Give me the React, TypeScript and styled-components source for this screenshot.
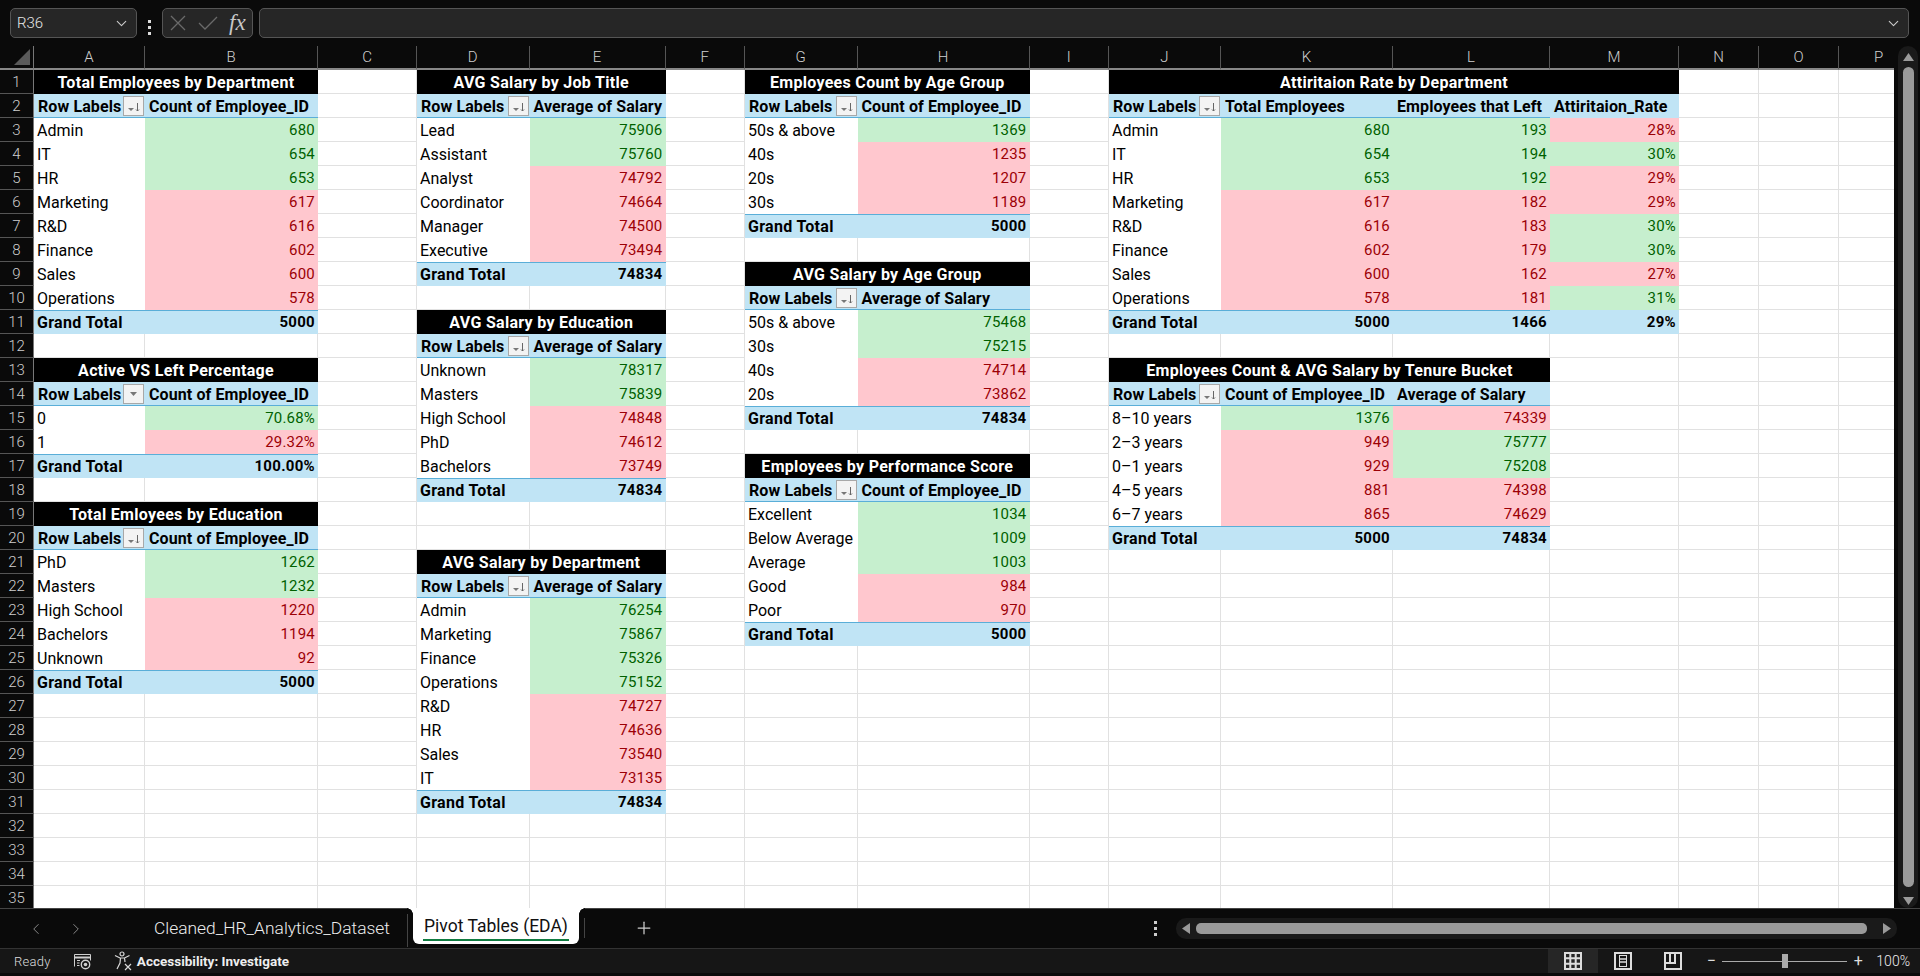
import React from "react";
import styled, { createGlobalStyle } from "styled-components";
import { ChevronDown, ChevronLeft, ChevronRight, Plus } from "lucide-react";

type Tone = "g" | "r";
type Entry = { label: string; values: [string, Tone][] };
type Pivot = {
  col: number;
  row: number;
  title: string;
  heads: string[];
  rows: Entry[];
  total: string[];
  plainFilter?: boolean;
  ruleCols?: number;
};

const G = (v: string | number): [string, Tone] => [String(v), "g"];
const R = (v: string | number): [string, Tone] => [String(v), "r"];
const e = (label: string, ...values: [string, Tone][]): Entry => ({ label, values });

const COUNT = "Count of Employee_ID";
const AVG = "Average of Salary";

const pivots: Pivot[] = [
  {
    col: 0, row: 1, title: "Total Employees by Department", heads: [COUNT],
    rows: [e("Admin", G(680)), e("IT", G(654)), e("HR", G(653)), e("Marketing", R(617)), e("R&D", R(616)), e("Finance", R(602)), e("Sales", R(600)), e("Operations", R(578))],
    total: ["5000"],
  },
  {
    col: 0, row: 13, title: "Active VS Left Percentage", heads: [COUNT], plainFilter: true,
    rows: [e("0", G("70.68%")), e("1", R("29.32%"))],
    total: ["100.00%"],
  },
  {
    col: 0, row: 19, title: "Total Emloyees by Education", heads: [COUNT],
    rows: [e("PhD", G(1262)), e("Masters", G(1232)), e("High School", R(1220)), e("Bachelors", R(1194)), e("Unknown", R(92))],
    total: ["5000"],
  },
  {
    col: 3, row: 1, title: "AVG Salary by Job Title", heads: [AVG],
    rows: [e("Lead", G(75906)), e("Assistant", G(75760)), e("Analyst", R(74792)), e("Coordinator", R(74664)), e("Manager", R(74500)), e("Executive", R(73494))],
    total: ["74834"],
  },
  {
    col: 3, row: 11, title: "AVG Salary by Education", heads: [AVG],
    rows: [e("Unknown", G(78317)), e("Masters", G(75839)), e("High School", R(74848)), e("PhD", R(74612)), e("Bachelors", R(73749))],
    total: ["74834"],
  },
  {
    col: 3, row: 21, title: "AVG Salary by Department", heads: [AVG],
    rows: [e("Admin", G(76254)), e("Marketing", G(75867)), e("Finance", G(75326)), e("Operations", G(75152)), e("R&D", R(74727)), e("HR", R(74636)), e("Sales", R(73540)), e("IT", R(73135))],
    total: ["74834"],
  },
  {
    col: 6, row: 1, title: "Employees Count by Age Group", heads: [COUNT],
    rows: [e("50s & above", G(1369)), e("40s", R(1235)), e("20s", R(1207)), e("30s", R(1189))],
    total: ["5000"],
  },
  {
    col: 6, row: 9, title: "AVG Salary by Age Group", heads: [AVG],
    rows: [e("50s & above", G(75468)), e("30s", G(75215)), e("40s", R(74714)), e("20s", R(73862))],
    total: ["74834"],
  },
  {
    col: 6, row: 17, title: "Employees by Performance Score", heads: [COUNT],
    rows: [e("Excellent", G(1034)), e("Below Average", G(1009)), e("Average", G(1003)), e("Good", R(984)), e("Poor", R(970))],
    total: ["5000"],
  },
  {
    col: 9, row: 1, title: "Attiritaion Rate by Department", heads: ["Total Employees", "Employees that Left", "Attiritaion_Rate"], ruleCols: 3,
    rows: [
      e("Admin", G(680), G(193), R("28%")),
      e("IT", G(654), G(194), G("30%")),
      e("HR", G(653), G(192), R("29%")),
      e("Marketing", R(617), R(182), R("29%")),
      e("R&D", R(616), R(183), G("30%")),
      e("Finance", R(602), R(179), G("30%")),
      e("Sales", R(600), R(162), R("27%")),
      e("Operations", R(578), R(181), G("31%")),
    ],
    total: ["5000", "1466", "29%"],
  },
  {
    col: 9, row: 13, title: "Employees Count & AVG Salary by Tenure Bucket", heads: [COUNT, AVG],
    rows: [
      e("8–10 years", G(1376), R(74339)),
      e("2–3 years", R(949), G(75777)),
      e("0–1 years", R(929), G(75208)),
      e("4–5 years", R(881), R(74398)),
      e("6–7 years", R(865), R(74629)),
    ],
    total: ["5000", "74834"],
  },
];

const COLS = "ABCDEFGHIJKLMNOP".split("");
const COL_WIDTHS = [111, 173, 99, 112.5, 136, 79.5, 112.5, 172, 79.5, 112, 172, 157, 129, 80, 80, 80];
const ROW_COUNT = 35;

type Kind = "title" | "head" | "label" | "g" | "r" | "total" | "totalNum";
type SheetCell = { kind: Kind; text: string; span?: number; rule?: boolean; filter?: "sort" | "plain"; covered?: boolean };

const cellMap = new Map<string, SheetCell>();
const put = (c: number, r: number, cell: SheetCell) => cellMap.set(`${c},${r}`, cell);

pivots.forEach((p) => {
  const width = p.heads.length + 1;
  const ruled = (i: number) => i < (p.ruleCols ?? width);
  put(p.col, p.row, { kind: "title", text: p.title, span: width });
  for (let i = 1; i < width; i++) put(p.col + i, p.row, { kind: "title", text: "", covered: true });

  put(p.col, p.row + 1, { kind: "head", text: "Row Labels", rule: true, filter: p.plainFilter ? "plain" : "sort" });
  p.heads.forEach((h, i) => put(p.col + i + 1, p.row + 1, { kind: "head", text: h, rule: ruled(i + 1) }));

  p.rows.forEach((entry, ri) => {
    const r = p.row + 2 + ri;
    put(p.col, r, { kind: "label", text: entry.label });
    entry.values.forEach(([v, tone], i) => put(p.col + i + 1, r, { kind: tone, text: v }));
  });

  const tr = p.row + 2 + p.rows.length;
  put(p.col, tr, { kind: "total", text: "Grand Total", rule: true });
  p.total.forEach((v, i) => put(p.col + i + 1, tr, { kind: "totalNum", text: v, rule: ruled(i + 1) }));
});

const GlobalStyle = createGlobalStyle`
  html, body {
    margin: 0;
    padding: 0;
    height: 100%;
    background: #0a0a0a;
    overflow: hidden;
  }
  * { box-sizing: border-box; }
`;

const Page = styled.div`
  width: 1920px;
  height: 976px;
  display: flex;
  flex-direction: column;
  background: #0a0a0a;
  font-family: Roboto, "Liberation Sans", sans-serif;
  overflow: hidden;
`;

const FormulaBar = styled.div`
  height: 46px;
  flex: none;
  display: flex;
  align-items: flex-start;
  padding: 8px 11px 0 10px;
`;

const Box = styled.div`
  height: 30px;
  border: 1px solid #555;
  border-radius: 5px;
  background: #262626;
  display: flex;
  align-items: center;
  color: #e8e8e8;
`;

const NameBox = styled(Box)`
  width: 127px;
  padding: 0 6px 0 6px;
  justify-content: space-between;
  font-size: 15px;
  font-weight: 300;
`;

const Dots = styled.div`
  width: 25px;
  align-self: stretch;
  display: flex;
  flex-direction: column;
  align-items: center;
  justify-content: center;
  gap: 3px;
  i {
    width: 3px;
    height: 3px;
    background: #ddd;
  }
`;

const FxBox = styled(Box)`
  width: 91px;
  padding: 0 0 0 7px;
  gap: 12px;
`;

const FxText = styled.span`
  font-family: "Liberation Serif", serif;
  font-style: italic;
  font-size: 23px;
  line-height: 24px;
  color: #c8c8c8;
  margin-left: -1px;
`;

const FormulaInput = styled(Box)`
  flex: 1;
  margin-left: 6px;
  justify-content: flex-end;
  padding-right: 6px;
`;

const Main = styled.div`
  height: 862px;
  flex: none;
  display: flex;
`;

const SheetFrame = styled.div`
  width: 1894px;
  height: 862px;
  overflow: hidden;
  flex: none;
`;

const Sheet = styled.div`
  display: grid;
  grid-template-columns: 34px ${COL_WIDTHS.map((w) => `${w}px`).join(" ")};
  grid-template-rows: repeat(${ROW_COUNT + 1}, 24px);
  width: 1919px;
  font-size: 15px;
`;

const Corner = styled.div`
  background: #0a0a0a;
  border-right: 1px solid #777;
  border-bottom: 2px solid #888;
  position: relative;
  &::after {
    content: "";
    position: absolute;
    right: 3px;
    bottom: 3px;
    border-style: solid;
    border-width: 0 0 16px 16px;
    border-color: transparent transparent #5a5a5a transparent;
  }
`;

const ColHead = styled.div`
  background: #0a0a0a;
  color: #cfcfcf;
  border-right: 1px solid #555;
  border-bottom: 2px solid #888;
  font-weight: 300;
  font-size: 15px;
  display: flex;
  align-items: center;
  justify-content: center;
`;

const RowHead = styled.div`
  background: #0a0a0a;
  color: #cfcfcf;
  border-right: 1px solid #777;
  border-bottom: 1px solid #555;
  font-weight: 300;
  font-size: 15px;
  display: flex;
  align-items: center;
  justify-content: center;
`;

const Blank = styled.div`
  background: #fff;
  border-right: 1px solid #e1e1e1;
  border-bottom: 1px solid #e1e1e1;
`;

const palette: Record<Kind, { bg: string; fg: string; weight: number; align: string; size: number; spacing: number }> = {
  title: { bg: "#000", fg: "#fff", weight: 700, align: "center", size: 16, spacing: 0.3 },
  head: { bg: "#c0e4f5", fg: "#000", weight: 700, align: "flex-start", size: 16, spacing: 0.1 },
  label: { bg: "#fff", fg: "#000", weight: 400, align: "flex-start", size: 16, spacing: 0 },
  g: { bg: "#c6efce", fg: "#006100", weight: 400, align: "flex-end", size: 15, spacing: 0.2 },
  r: { bg: "#ffc7ce", fg: "#9c0006", weight: 400, align: "flex-end", size: 15, spacing: 0.2 },
  total: { bg: "#c0e4f5", fg: "#000", weight: 700, align: "flex-start", size: 16, spacing: 0.3 },
  totalNum: { bg: "#c0e4f5", fg: "#000", weight: 700, align: "flex-end", size: 15, spacing: 0.3 },
};

const Cell = styled.div<{ $kind: Kind; $span?: number; $rule?: boolean }>`
  position: relative;
  min-width: 0;
  display: flex;
  align-items: center;
  white-space: nowrap;
  padding: 0 3px 0 ${(p) => (p.$kind === "head" ? 4 : 3)}px;
  grid-column: span ${(p) => p.$span ?? 1};
  background: ${(p) => palette[p.$kind].bg};
  color: ${(p) => palette[p.$kind].fg};
  font-weight: ${(p) => palette[p.$kind].weight};
  font-size: ${(p) => palette[p.$kind].size}px;
  letter-spacing: ${(p) => palette[p.$kind].spacing}px;
  justify-content: ${(p) => palette[p.$kind].align};
  box-shadow: ${(p) =>
    !p.$rule ? "none" : p.$kind === "head" ? "inset 0 -1px 0 #5aaed8" : "inset 0 1px 0 #5aaed8"};
`;

const FilterButton = styled.div`
  position: absolute;
  right: 1px;
  top: 2px;
  width: 21px;
  height: 20px;
  background: #f3f3f3;
  border: 1px solid #a8a8a8;
`;

const VScroll = styled.div`
  width: 26px;
  display: flex;
`;

const VTrack = styled.div`
  width: 20px;
  margin-left: 4px;
  background: #1a1a1a;
  border-radius: 10px;
  display: flex;
  flex-direction: column;
  align-items: center;
  padding: 7px 0 3px;
  gap: 6px;
`;

const VThumb = styled.div`
  width: 11px;
  flex: 1;
  margin-bottom: 4px;
  background: #9a9a9a;
  border-radius: 6px;
`;

const TabBar = styled.div`
  height: 40px;
  flex: none;
  display: flex;
  align-items: flex-start;
  color: #eee;
  border-top: 1px solid #444;
`;

const TabNav = styled.div`
  width: 108px;
  height: 39px;
  padding-left: 27px;
  display: flex;
  align-items: center;
  gap: 22px;
  color: #8a8a8a;
  flex: none;
`;

const IdleTab = styled.div`
  margin-left: 46px;
  height: 38px;
  width: 254px;
  display: flex;
  align-items: center;
  font-size: 17.4px;
  font-weight: 300;
  color: #eee;
  white-space: nowrap;
  border-right: 1px solid #444;
`;

const ActiveTab = styled.div`
  position: relative;
  margin-left: 5px;
  margin-top: -1px;
  width: 166px;
  height: 36px;
  flex: none;
  background: #fff;
  color: #111;
  border-radius: 0 0 6px 6px;
  font-size: 17.5px;
  display: flex;
  flex-direction: column;
  align-items: center;
  justify-content: flex-end;
  padding-bottom: 3px;
  white-space: nowrap;
  &::before,
  &::after {
    content: "";
    position: absolute;
    top: 0;
    width: 6px;
    height: 6px;
  }
  &::before {
    left: -6px;
    background: radial-gradient(circle at 0 100%, #0a0a0a 5.5px, #fff 6px);
  }
  &::after {
    right: -6px;
    background: radial-gradient(circle at 100% 100%, #0a0a0a 5.5px, #fff 6px);
  }
`;

const TabLine = styled.div`
  width: 146px;
  height: 2px;
  margin-top: 3px;
  background: #107c41;
`;

const TabDivider = styled.div`
  width: 1px;
  height: 20px;
  margin: 9px 0 0 5px;
  background: #444;
`;

const AddTab = styled.div`
  width: 118px;
  height: 38px;
  display: flex;
  align-items: center;
  justify-content: center;
  color: #ccc;
`;

const TabSpacer = styled.div`
  flex: 1;
  height: 38px;
  display: flex;
  align-items: center;
  justify-content: flex-end;
  gap: 19px;
  padding-right: 23px;
`;

const VDots = styled(Dots)`
  flex: none;
  width: 3px;
  i {
    background: #ccc;
  }
`;

const HTrack = styled.div`
  width: 721px;
  height: 21px;
  flex: none;
  background: #1a1a1a;
  border-radius: 10px;
  display: flex;
  align-items: center;
  gap: 6px;
  padding: 0 6px;
`;

const HThumb = styled.div`
  flex: 1;
  height: 11px;
  margin-right: 10px;
  background: #9a9a9a;
  border-radius: 5px;
`;

const StatusBar = styled.div`
  height: 25px;
  flex: none;
  background: #161616;
  border-top: 1px solid #333;
  display: flex;
  align-items: center;
  padding: 0 10px 0 14px;
  color: #ddd;
  font-size: 13px;
`;

const StatusText = styled.span`
  font-weight: 300;
  letter-spacing: 0.3px;
`;

const StatusBold = styled.span`
  font-weight: 700;
  font-size: 13.5px;
  color: #eee;
  margin-left: 4px;
  white-space: nowrap;
`;

const StatusGroup = styled.div`
  display: flex;
  align-items: center;
  margin-left: 22px;
`;

const StatusRight = styled.div`
  margin-left: auto;
  height: 100%;
  display: flex;
  align-items: center;
`;

const ViewButton = styled.div<{ $on?: boolean }>`
  width: 50px;
  height: 100%;
  display: flex;
  align-items: center;
  justify-content: center;
  background: ${(p) => (p.$on ? "#262626" : "transparent")};
`;

const ZoomControl = styled.div`
  margin-left: 8px;
  display: flex;
  align-items: center;
  gap: 6px;
  color: #ddd;
`;

const ZoomSign = styled.span`
  width: 10px;
  text-align: center;
  font-size: 16px;
  line-height: 16px;
`;

const ZoomTrack = styled.div`
  position: relative;
  width: 125px;
  height: 1px;
  background: #aaa;
  &::after {
    content: "";
    position: absolute;
    left: 60px;
    top: -7px;
    width: 6px;
    height: 14px;
    background: #aaa;
  }
`;

const ZoomValue = styled.span`
  margin-left: 13px;
  font-weight: 300;
  font-size: 14px;
  color: #eee;
`;

const TriangleSvg = styled.svg`
  flex: none;
`;

const SortGlyph = () => (
  <svg width="19" height="18" viewBox="0 0 19 18">
    <path d="M4 11h6l-3 3z" fill="#777" />
    <path d="M13.5 6v8M12 12.5l1.5 1.5 1.5-1.5" stroke="#666" strokeWidth="1" fill="none" />
  </svg>
);

const PlainGlyph = () => (
  <svg width="19" height="18" viewBox="0 0 19 18">
    <path d="M6 7h7l-3.5 4z" fill="#777" />
  </svg>
);

const CancelGlyph = () => (
  <svg width="16" height="16" viewBox="0 0 16 16" fill="none" stroke="#6a6a6a" strokeWidth="1.3">
    <path d="M1 1l14 14M15 1L1 15" />
  </svg>
);

const EnterGlyph = () => (
  <svg width="20" height="14" viewBox="0 0 20 14" fill="none" stroke="#6a6a6a" strokeWidth="1.3">
    <path d="M1 7l6 6L19 1" />
  </svg>
);

const Triangle = ({ dir }: { dir: "up" | "down" | "left" | "right" }) => {
  const d = { up: "M0 8L5.5 0L11 8z", down: "M0 0L11 0L5.5 8z", left: "M8 0V11L0 5.5z", right: "M0 0V11L8 5.5z" }[dir];
  const vertical = dir === "up" || dir === "down";
  return (
    <TriangleSvg width={vertical ? 11 : 8} height={vertical ? 8 : 11}>
      <path d={d} fill="#9a9a9a" />
    </TriangleSvg>
  );
};

const MacroIcon = () => (
  <svg width="19" height="17" viewBox="0 0 19 17" fill="none" stroke="#d0d0d0">
    <path d="M1.5 13.5V1.5h16v6" />
    <path d="M1.5 4.5h16" strokeWidth="2" />
    <path d="M4 7.5h3M4 10h2.5M4 12.5h2.5" />
    <circle cx="12.5" cy="11.5" r="4.2" strokeWidth="1.4" />
    <circle cx="12.5" cy="11.5" r="1.8" fill="#d0d0d0" stroke="none" />
  </svg>
);

const AccessIcon = () => (
  <svg width="19" height="20" viewBox="0 0 19 20" fill="none" stroke="#d8d8d8" strokeWidth="1.2">
    <circle cx="8" cy="3" r="2" />
    <path d="M1 4.5l5 2.5h4.5l5-2.5M6.5 7l-.5 5-3 6M10.5 7l.5 4" />
    <path d="M11 13l6 6M17 13l-6 6" />
  </svg>
);

const NormalIcon = () => (
  <svg width="18" height="18" viewBox="0 0 18 18" fill="none" stroke="#ddd" strokeWidth="2">
    <path d="M1 1h16v16H1zM6.3 1v16M11.7 1v16M1 6.3h16M1 11.7h16" />
  </svg>
);

const LayoutIcon = () => (
  <svg width="18" height="18" viewBox="0 0 18 18" fill="none" stroke="#ddd">
    <rect x="1" y="1" width="16" height="16" strokeWidth="2" />
    <rect x="5.5" y="3.5" width="7" height="11" />
    <path d="M6 7h6M6 10h6" stroke="#aaa" strokeWidth="2" />
  </svg>
);

const BreakIcon = () => (
  <svg width="18" height="18" viewBox="0 0 18 18" fill="none" stroke="#ddd" strokeWidth="2">
    <path d="M1 1h16v16H1zM1 11h10V1M6 1v10" />
  </svg>
);

const renderCell = (c: number, r: number) => {
  const cell = cellMap.get(`${c},${r}`);
  const key = `${c}-${r}`;
  if (!cell) return <Blank key={key} />;
  if (cell.covered) return null;
  return (
    <Cell key={key} $kind={cell.kind} $span={cell.span} $rule={cell.rule}>
      {cell.text}
      {cell.filter && <FilterButton>{cell.filter === "plain" ? <PlainGlyph /> : <SortGlyph />}</FilterButton>}
    </Cell>
  );
};

export default function App() {
  const rows = Array.from({ length: ROW_COUNT }, (_, i) => i + 1);
  return (
    <Page>
      <GlobalStyle />
      <FormulaBar>
        <NameBox>
          R36
          <ChevronDown size={17} color="#ccc" strokeWidth={1.5} />
        </NameBox>
        <Dots>
          <i />
          <i />
          <i />
        </Dots>
        <FxBox>
          <CancelGlyph />
          <EnterGlyph />
          <FxText>fx</FxText>
        </FxBox>
        <FormulaInput>
          <ChevronDown size={17} color="#ccc" strokeWidth={1.5} />
        </FormulaInput>
      </FormulaBar>

      <Main>
        <SheetFrame>
          <Sheet>
            <Corner />
            {COLS.map((c) => (
              <ColHead key={c}>{c}</ColHead>
            ))}
            {rows.map((r) => (
              <React.Fragment key={r}>
                <RowHead>{r}</RowHead>
                {COLS.map((_, c) => renderCell(c, r))}
              </React.Fragment>
            ))}
          </Sheet>
        </SheetFrame>
        <VScroll>
          <VTrack>
            <Triangle dir="up" />
            <VThumb />
            <Triangle dir="down" />
          </VTrack>
        </VScroll>
      </Main>

      <TabBar>
        <TabNav>
          <ChevronLeft size={18} strokeWidth={1.3} />
          <ChevronRight size={18} strokeWidth={1.3} />
        </TabNav>
        <IdleTab>Cleaned_HR_Analytics_Dataset</IdleTab>
        <ActiveTab>
          Pivot Tables (EDA)
          <TabLine />
        </ActiveTab>
        <TabDivider />
        <AddTab>
          <Plus size={20} strokeWidth={1.5} />
        </AddTab>
        <TabSpacer>
          <VDots>
            <i />
            <i />
            <i />
          </VDots>
          <HTrack>
            <Triangle dir="left" />
            <HThumb />
            <Triangle dir="right" />
          </HTrack>
        </TabSpacer>
      </TabBar>

      <StatusBar>
        <StatusText>Ready</StatusText>
        <StatusGroup>
          <MacroIcon />
        </StatusGroup>
        <StatusGroup>
          <AccessIcon />
          <StatusBold>Accessibility: Investigate</StatusBold>
        </StatusGroup>
        <StatusRight>
          <ViewButton $on>
            <NormalIcon />
          </ViewButton>
          <ViewButton>
            <LayoutIcon />
          </ViewButton>
          <ViewButton>
            <BreakIcon />
          </ViewButton>
          <ZoomControl>
            <ZoomSign>−</ZoomSign>
            <ZoomTrack />
            <ZoomSign>+</ZoomSign>
          </ZoomControl>
          <ZoomValue>100%</ZoomValue>
        </StatusRight>
      </StatusBar>
    </Page>
  );
}
